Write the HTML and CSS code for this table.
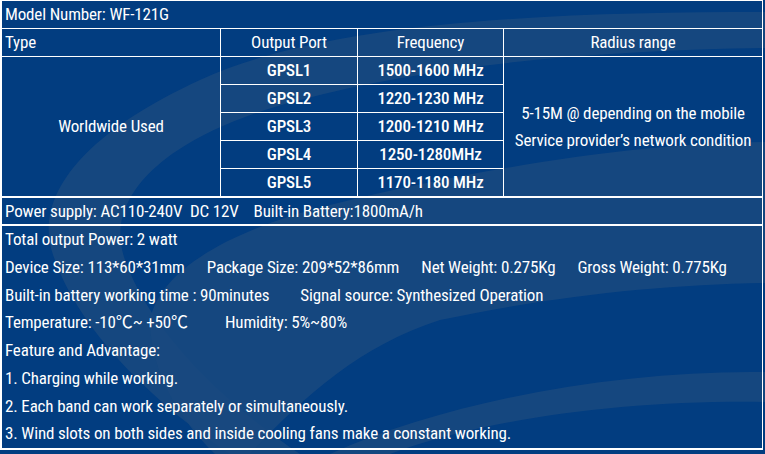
FILE: index.html
```html
<!DOCTYPE html>
<html lang="en">
<head>
<meta charset="utf-8">
<title>Model WF-121G specification</title>
<link rel="stylesheet" href="styles.css">
</head>
<body>
<div class="sheet">
  <svg class="swoosh" width="765" height="454" viewBox="0 0 765 454" aria-hidden="true">
    <path class="light" d="M765 12 C560 12 330 20 200 80 C80 135 30 200 55 260 C80 330 150 400 230 454 L300 454 C220 400 150 330 125 260 C100 190 180 130 300 100 C430 65 600 50 765 48 Z"/>
    <path class="light" d="M765 142 C640 142 470 170 330 205 C230 230 160 270 150 320 C150 380 190 430 215 454 L250 454 C300 400 360 345 440 320 C560 295 660 285 765 283 Z"/>
    <path class="light" d="M330 454 C450 400 620 370 765 372 L765 402 C620 400 480 420 390 454 Z"/>
  </svg>

  <div class="spec">
    <div class="cell full start">Model Number: WF-121G</div>
    <div class="cell start">Type</div>
    <div class="cell">Output Port</div>
    <div class="cell">Frequency</div>
    <div class="cell">Radius range</div>
    <div class="cell span5">Worldwide Used</div>
    <div class="cell strong">GPSL1</div>
    <div class="cell strong">1500-1600 MHz</div>
    <div class="cell span5 radius">5-15M @ depending on the mobile<br>Service provider’s network condition</div>
    <div class="cell strong">GPSL2</div>
    <div class="cell strong">1220-1230 MHz</div>
    <div class="cell strong">GPSL3</div>
    <div class="cell strong">1200-1210 MHz</div>
    <div class="cell strong">GPSL4</div>
    <div class="cell strong">1250-1280MHz</div>
    <div class="cell strong">GPSL5</div>
    <div class="cell strong">1170-1180 MHz</div>
  </div>

  <div class="power">
    <span>Power supply: AC110-240V&nbsp; DC 12V</span>
    <span>Built-in Battery:1800mA/h</span>
  </div>

  <div class="details">
    <div class="line">Total output Power: 2 watt</div>
    <div class="line"><span>Device Size: 113*60*31mm</span><span>Package Size: 209*52*86mm</span><span>Net Weight: 0.275Kg</span><span>Gross Weight: 0.775Kg</span></div>
    <div class="line wide"><span>Built-in battery working time : 90minutes</span><span>Signal source: Synthesized Operation</span></div>
    <div class="line wider"><span>Temperature: -10℃~ +50℃</span><span>Humidity: 5%~80%</span></div>
    <div class="line">Feature and Advantage:</div>
    <div class="line">1. Charging while working.</div>
    <div class="line">2. Each band can work separately or simultaneously.</div>
    <div class="line">3. Wind slots on both sides and inside cooling fans make a constant working.</div>
  </div>
</div>
</body>
</html>
```
FILE: styles.css
```css
html, body {
  margin: 0;
  padding: 0;
  background: #023d80;
}

.sheet {
  position: relative;
  width: 765px;
  height: 454px;
  overflow: hidden;
  background: #023d80;
  color: #ffffff;
  font-family: "Roboto Condensed", "Noto Sans CJK SC", sans-serif;
  font-size: 17px;
  letter-spacing: -0.15px;
}

.swoosh {
  position: absolute;
  left: 0;
  top: 0;
  z-index: 0;
}

.swoosh .light {
  fill: #19497f;
  opacity: 0.85;
}

.spec,
.power,
.details {
  position: relative;
  z-index: 1;
  border-left: 2px solid #fff;
}

.spec {
  display: grid;
  width: 761px;
  grid-template-columns: 219px 137px 146px 259px;
  grid-auto-rows: 28px;
  border-top: 1px solid #fff;
}

.cell {
  box-sizing: border-box;
  display: flex;
  align-items: center;
  justify-content: center;
  text-align: center;
  border-right: 1px solid #fff;
  border-bottom: 1px solid #fff;
  line-height: 27px;
  white-space: nowrap;
}

.cell.full {
  grid-column: 1 / -1;
}

.cell.start {
  justify-content: flex-start;
  padding-left: 3px;
}

.cell.span5 {
  grid-row: span 5;
}

.cell.strong {
  font-weight: 500;
}

.radius {
  line-height: 27.5px;
  padding-top: 1px;
}

.power {
  box-sizing: border-box;
  width: 763px;
  height: 28px;
  border-top: 1px solid #fff;
  border-bottom: 1px solid #fff;
  border-right: 1px solid #fff;
  display: flex;
  align-items: center;
  gap: 15px;
  padding-left: 3px;
  line-height: 26px;
  white-space: nowrap;
}

.details {
  box-sizing: border-box;
  width: 763px;
  height: 225px;
  border-top: 1px solid #fff;
  border-bottom: 2px solid #fff;
  border-right: 1px solid #fff;
  padding-left: 3px;
}

.line {
  display: flex;
  gap: 22px;
  height: 27.75px;
  line-height: 27.75px;
  white-space: nowrap;
}

.line.wide {
  gap: 31px;
}

.line.wider {
  gap: 37px;
}
```
